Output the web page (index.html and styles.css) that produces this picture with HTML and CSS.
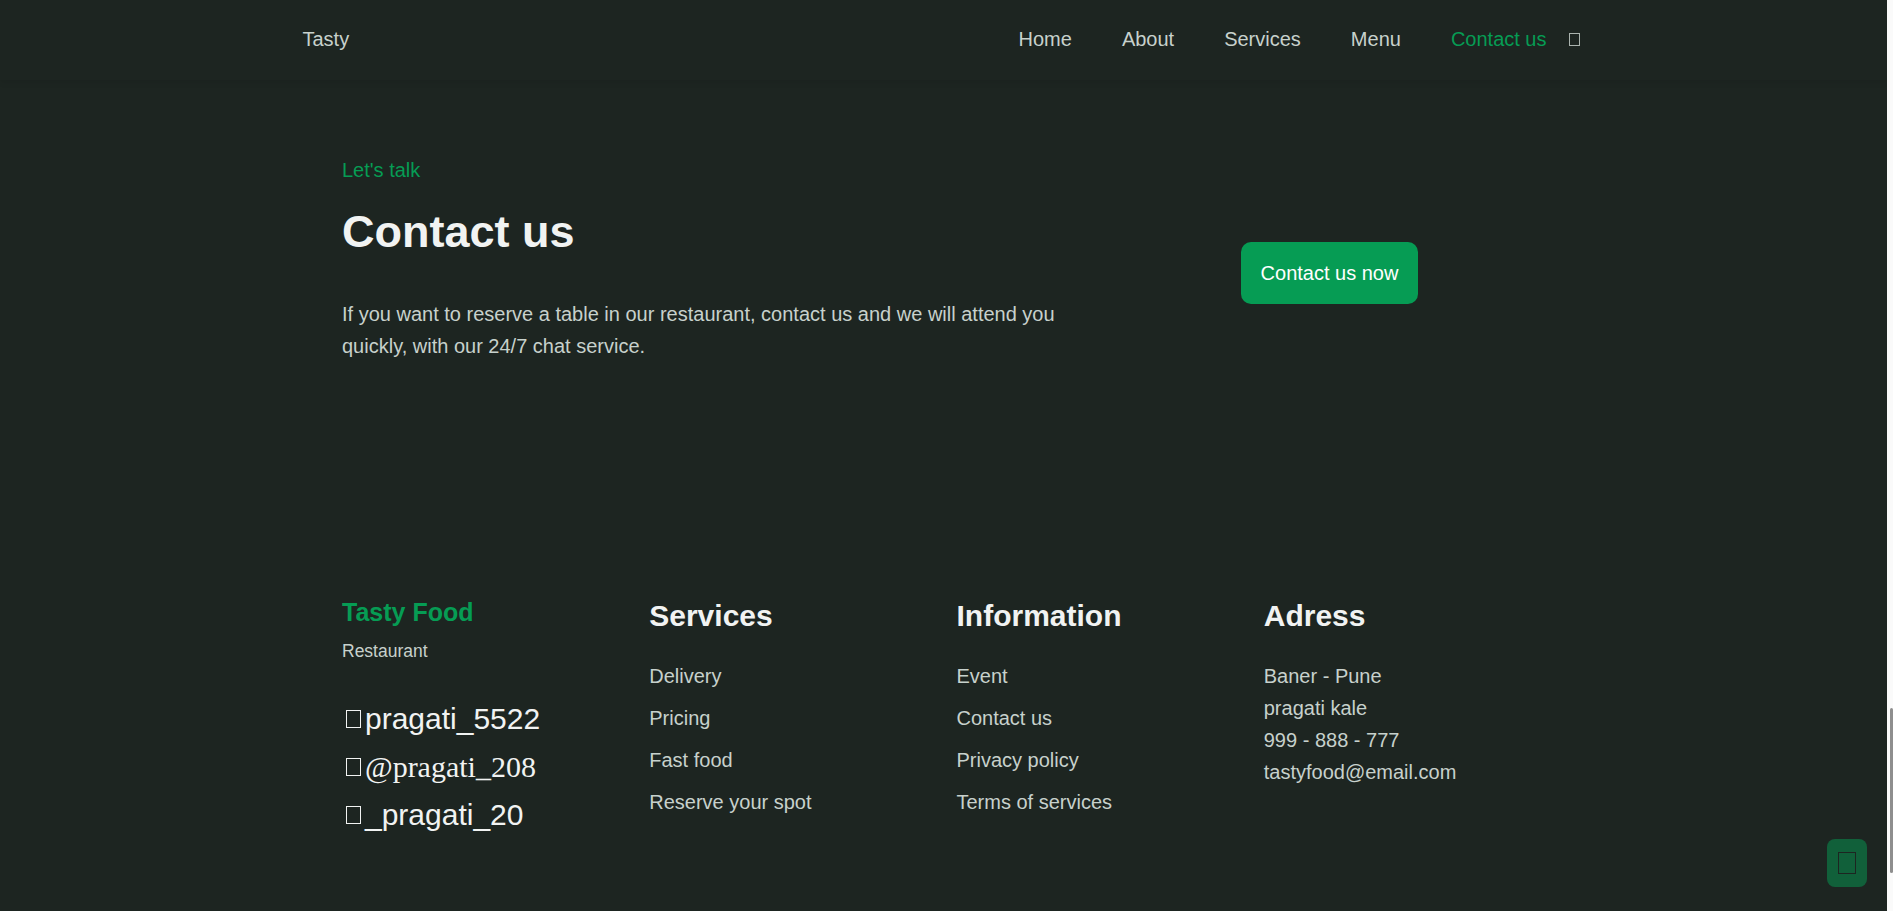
FILE: index.html
```html
<!DOCTYPE html>
<html lang="en">
<head>
<meta charset="utf-8">
<title>Tasty</title>
<link rel="stylesheet" href="styles.css">
</head>
<body>
<div class="page">
  <header class="header">
    <nav class="nav">
      <a class="nav-logo" href="#">Tasty</a>
      <div class="nav-right">
        <ul class="nav-list">
          <li><a class="nav-link" href="#">Home</a></li>
          <li><a class="nav-link" href="#">About</a></li>
          <li><a class="nav-link" href="#">Services</a></li>
          <li><a class="nav-link" href="#">Menu</a></li>
          <li><a class="nav-link active" href="#">Contact us</a></li>
        </ul>
        <span class="tofu tofu-nav"></span>
      </div>
    </nav>
  </header>

  <section class="contact">
    <div class="contact-grid">
      <div class="contact-text">
        <span class="subtitle">Let's talk</span>
        <h1 class="title">Contact us</h1>
        <p class="description">If you want to reserve a table in our restaurant, contact us and we will attend you quickly, with our 24/7 chat service.</p>
      </div>
      <div class="contact-action">
        <a class="button" href="#">Contact us now</a>
      </div>
    </div>
  </section>

  <footer class="footer">
    <div class="footer-grid">
      <div class="footer-col">
        <a class="footer-logo" href="#">Tasty Food</a>
        <span class="footer-desc">Restaurant</span>
        <a class="social" href="#"><span class="tofu tofu-social"></span>pragati_5522</a>
        <a class="social serif" href="#"><span class="tofu tofu-social"></span>@pragati_208</a>
        <a class="social" href="#"><span class="tofu tofu-social"></span>_pragati_20</a>
      </div>
      <div class="footer-col">
        <h2 class="footer-title">Services</h2>
        <ul class="footer-list">
          <li><a class="footer-link" href="#">Delivery</a></li>
          <li><a class="footer-link" href="#">Pricing</a></li>
          <li><a class="footer-link" href="#">Fast food</a></li>
          <li><a class="footer-link" href="#">Reserve your spot</a></li>
        </ul>
      </div>
      <div class="footer-col">
        <h2 class="footer-title">Information</h2>
        <ul class="footer-list">
          <li><a class="footer-link" href="#">Event</a></li>
          <li><a class="footer-link" href="#">Contact us</a></li>
          <li><a class="footer-link" href="#">Privacy policy</a></li>
          <li><a class="footer-link" href="#">Terms of services</a></li>
        </ul>
      </div>
      <div class="footer-col">
        <h2 class="footer-title">Adress</h2>
        <ul class="footer-list plain">
          <li>Baner - Pune</li>
          <li>pragati kale</li>
          <li>999 - 888 - 777</li>
          <li>tastyfood@email.com</li>
        </ul>
      </div>
    </div>
  </footer>
</div>

<a class="scrolltop" href="#"><span class="tofu tofu-top"></span></a>
<div class="scrollbar"><div class="scrollbar-thumb"></div></div>
</body>
</html>
```

FILE: styles.css
```css
* {
  box-sizing: border-box;
}

html, body {
  margin: 0;
  padding: 0;
  height: 100%;
  overflow: hidden;
}

body {
  background: #1d2521;
  color: #c7d1cc;
  font-family: "Liberation Sans", Arial, sans-serif;
  font-size: 20px;
  line-height: 1.6;
}

a {
  text-decoration: none;
  color: inherit;
}

ul {
  list-style: none;
  margin: 0;
  padding: 0;
}

h1, h2, p {
  margin: 0;
}

.page {
  width: 1887px;
  height: 911px;
}

/* Header */
.header {
  height: 80px;
  background: #1d2521;
  box-shadow: 0 3px 6px rgba(0, 0, 0, 0.07);
  position: relative;
  z-index: 2;
}

.nav {
  width: 1280px;
  height: 78px;
  margin: 0 auto;
  display: flex;
  align-items: center;
  justify-content: space-between;
}

.nav-logo {
  color: #c7d1cc;
  margin-left: -1px;
}

.nav-right {
  display: flex;
  align-items: center;
}

.nav-list {
  display: flex;
  gap: 50px;
}

.nav-link {
  color: #c7d1cc;
}

.nav-link.active {
  color: #069c54;
}

.tofu {
  display: inline-block;
  border-style: solid;
}

.tofu-nav {
  width: 11px;
  height: 13px;
  border-width: 1px;
  border-color: #aab3ae;
  margin-left: 22px;
  margin-right: 4px;
}

/* Contact */
.contact {
  padding-top: 74px;
}

.contact-grid {
  width: 1203px;
  margin: 0 auto;
  display: grid;
  grid-template-columns: 772px 1fr;
  align-items: center;
}

.subtitle {
  display: block;
  color: #069c54;
  margin-bottom: 10px;
}

.title {
  font-size: 45px;
  line-height: 72px;
  font-weight: 700;
  color: #f1f3f2;
  margin-bottom: 30px;
}

.description {
  margin-bottom: 30px;
}

.contact-action {
  display: flex;
  justify-content: center;
}

.button {
  display: inline-block;
  background: #069c54;
  color: #ffffff;
  padding: 15px 20px;
  border-radius: 10px;
}

/* Footer */
.footer {
  padding-top: 200px;
}

.footer-grid {
  width: 1203px;
  margin: 0 auto;
  display: grid;
  grid-template-columns: repeat(4, 1fr);
  column-gap: 26px;
}

.footer-logo {
  display: block;
  font-size: 25px;
  line-height: 40px;
  font-weight: 700;
  color: #069c54;
}

.footer-desc {
  display: block;
  font-size: 17.5px;
  line-height: 28px;
  margin: 5px 0 30px;
  color: #c7d1cc;
}

.social {
  display: flex;
  align-items: center;
  font-size: 30px;
  line-height: 48px;
  color: #f1f3f2;
}

.social.serif {
  font-family: "Liberation Serif", "Times New Roman", serif;
}

.tofu-social {
  width: 15px;
  height: 18px;
  border-width: 1.5px;
  border-color: #f1f3f2;
  margin-left: 4px;
  margin-right: 4px;
}

.footer-title {
  font-size: 30px;
  line-height: 48px;
  font-weight: 700;
  color: #f1f3f2;
  margin-bottom: 20px;
}

.footer-link {
  display: inline-block;
  margin-bottom: 10px;
  color: #c7d1cc;
}

.footer-list.plain li {
  line-height: 32px;
}

/* Scroll top button */
.scrolltop {
  position: fixed;
  right: 26px;
  bottom: 24px;
  width: 40px;
  height: 48px;
  border-radius: 8px;
  background: rgba(6, 156, 84, 0.5);
  display: flex;
  align-items: center;
  justify-content: center;
  z-index: 5;
}

.tofu-top {
  width: 18px;
  height: 22px;
  border-width: 1.5px;
  border-color: #1d2521;
}

/* Fake page scrollbar */
.scrollbar {
  position: fixed;
  top: 0;
  right: 0;
  width: 6px;
  height: 911px;
  background: #fafafa;
  z-index: 6;
}

.scrollbar-thumb {
  position: absolute;
  left: 3px;
  top: 708px;
  width: 3px;
  height: 165px;
  border-radius: 2px;
  background: #8e8e8e;
}
```
